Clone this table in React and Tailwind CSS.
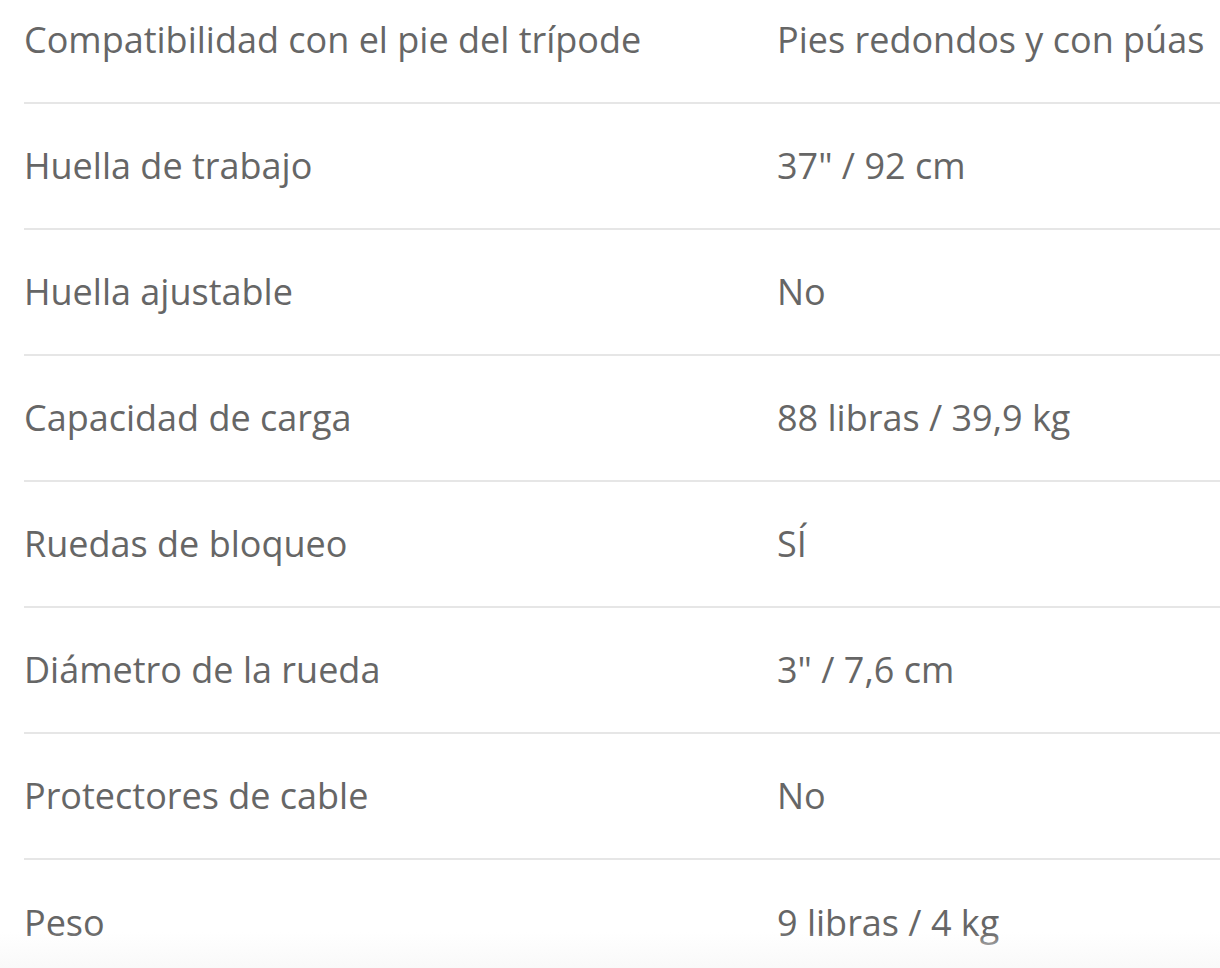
import React from 'react';

const specs = [
  ['Compatibilidad con el pie del trípode', 'Pies redondos y con púas'],
  ['Huella de trabajo', '37" / 92 cm'],
  ['Huella ajustable', 'No'],
  ['Capacidad de carga', '88 libras / 39,9 kg'],
  ['Ruedas de bloqueo', 'SÍ'],
  ['Diámetro de la rueda', '3" / 7,6 cm'],
  ['Protectores de cable', 'No'],
  ['Peso', '9 libras / 4 kg'],
];

export default function App() {
  return (
    <div className="relative h-[968px] overflow-hidden bg-white font-['Open_Sans',sans-serif] text-[#666666]">
      <div className="ml-6 -mt-[22px]">
        {specs.map(([label, value], i) => (
          <div
            key={label}
            className={`grid h-[126px] grid-cols-[753px_1fr] items-center text-[36px] leading-none ${
              i < specs.length - 1 ? 'border-b-2 border-[#e6e6e6]' : ''
            }`}
          >
            <span className="whitespace-nowrap">{label}</span>
            <span className="whitespace-nowrap">{value}</span>
          </div>
        ))}
      </div>
      <div className="pointer-events-none absolute inset-x-0 bottom-0 h-[36px] bg-gradient-to-b from-white/0 to-[#f9f9f9]" />
    </div>
  );
}
